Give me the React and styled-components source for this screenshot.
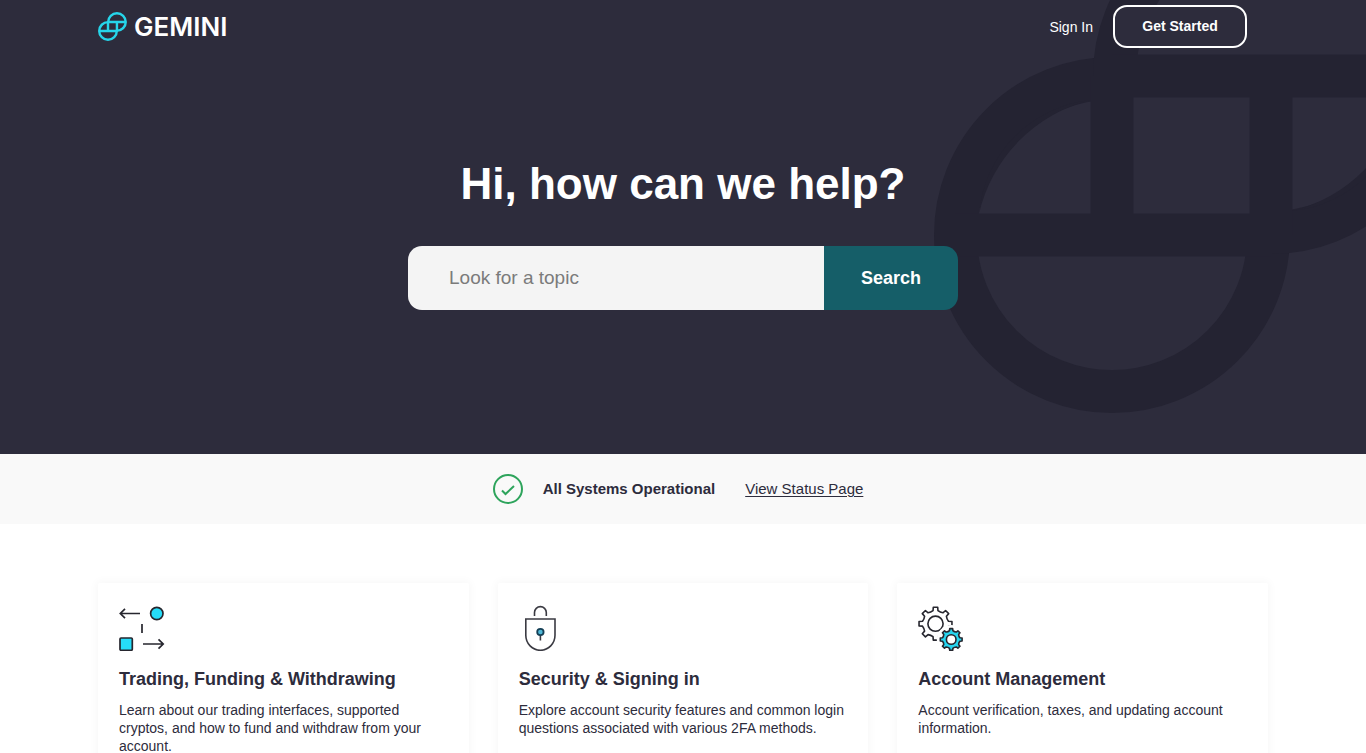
import React from "react";
import styled, { createGlobalStyle } from "styled-components";

// Outline of a cog wheel centered on cx, cy
function cogPath(cx, cy, outer, inner, teeth = 8) {
  const step = (Math.PI * 2) / teeth;
  const at = (radius, angle) =>
    `${(cx + radius * Math.sin(angle)).toFixed(2)} ${(cy - radius * Math.cos(angle)).toFixed(2)}`;
  let d = "";
  for (let i = 0; i < teeth; i++) {
    const a = i * step;
    d += `${i ? "L" : "M"}${at(inner, a - step * 0.24)}`;
    d += `L${at(outer, a - step * 0.17)}L${at(outer, a + step * 0.17)}`;
    d += `L${at(inner, a + step * 0.24)}`;
    d += `Q${at(inner - 1, a + step * 0.5)} ${at(inner, a + step * 0.76)}`;
  }
  return `${d}Z`;
}

// The two interlocked circles of the brand
function GeminiMark() {
  return (
    <g fill="none" stroke="currentColor" strokeWidth="43">
      <path d="M178 180.5A156.5 156.5 0 1 0 334.5 337" />
      <path d="M180.5 178A156.5 156.5 0 1 1 337 334.5" />
      <path d="M178 178H494M21 337H337M178 178V337M337 178V337" />
      <g fill="currentColor" stroke="none">
        <path d="M45 316A152 152 0 0 1 157 202A125 125 0 0 0 45 316Z" />
        <path d="M470 199A152 152 0 0 1 358 313A125 125 0 0 0 470 199Z" />
      </g>
    </g>
  );
}

function TradingIcon() {
  return (
    <CardIcon viewBox="0 0 46 46" aria-hidden="true">
      <g fill="none" stroke="#26262e" strokeWidth="1.7">
        <path d="M21 8.5H1.5M6 3.8L1.3 8.5L6 13.2M23 19V28M24 39H44M39.5 34.3L44.2 39L39.5 43.7" />
        <circle cx="37.8" cy="8.5" r="6.2" fill="#26ddf9" />
        <rect x="1" y="33" width="12.3" height="12.3" rx="1" fill="#26ddf9" />
      </g>
    </CardIcon>
  );
}

function SecurityIcon() {
  return (
    <CardIcon viewBox="0 0 46 46" aria-hidden="true">
      <g fill="none" stroke="#3a3a42" strokeWidth="1.6">
        <path d="M15.5 11V7.5A5.9 5.9 0 0 1 27.3 7.5V11" />
        <path d="M6.8 14H36V30.3A14.6 15 0 0 1 6.8 30.3Z" />
        <path d="M21.4 29V35.5" />
        <circle cx="21.4" cy="27" r="3.2" fill="#4fb8d8" stroke="#153f55" strokeWidth="1.8" />
      </g>
    </CardIcon>
  );
}

function AccountIcon() {
  return (
    <CardIcon viewBox="0 0 46 46" aria-hidden="true">
      <g fill="none" stroke="#26262e" strokeWidth="1.6" strokeLinejoin="round">
        <path d={cogPath(17.5, 18.7, 16.6, 13.2)} />
        <circle cx="17.5" cy="18.7" r="7.6" />
        <circle cx="33.2" cy="34.5" r="14.4" fill="#fff" stroke="none" />
        <path d={cogPath(33.2, 34.5, 11, 9)} fill="#26d5ef" />
        <circle cx="33.2" cy="34.5" r="4.8" fill="#fff" />
      </g>
    </CardIcon>
  );
}

const topics = [
  {
    icon: <TradingIcon />,
    title: "Trading, Funding & Withdrawing",
    text: "Learn about our trading interfaces, supported cryptos, and how to fund and withdraw from your account.",
  },
  {
    icon: <SecurityIcon />,
    title: "Security & Signing in",
    text: "Explore account security features and common login questions associated with various 2FA methods.",
  },
  {
    icon: <AccountIcon />,
    title: "Account Management",
    text: "Account verification, taxes, and updating account information.",
  },
];

export default function App() {
  return (
    <>
      <GlobalStyle />
      <Hero>
        <HeroArt viewBox="0 0 516 516" aria-hidden="true">
          <GeminiMark />
        </HeroArt>
        <Header>
          <Brand href="#home">
            <BrandMark viewBox="0 0 516 516" aria-hidden="true">
              <GeminiMark />
            </BrandMark>
            GEMINI
          </Brand>
          <Nav>
            <SignIn href="#sign-in">Sign In</SignIn>
            <GetStarted type="button">Get Started</GetStarted>
          </Nav>
        </Header>
        <HeroContent>
          <h1>Hi, how can we help?</h1>
          <SearchForm role="search" onSubmit={(e) => e.preventDefault()}>
            <SearchInput type="search" placeholder="Look for a topic" aria-label="Look for a topic" />
            <SearchButton type="submit">Search</SearchButton>
          </SearchForm>
        </HeroContent>
      </Hero>

      <StatusBar>
        <StatusIcon viewBox="0 0 30 30" aria-hidden="true">
          <circle cx="15" cy="15" r="14" />
          <path d="M9 16.5L12.5 20L21 12" />
        </StatusIcon>
        <strong>All Systems Operational</strong>
        <StatusLink href="#status">View Status Page</StatusLink>
      </StatusBar>

      <Topics>
        {topics.map((topic) => (
          <Card key={topic.title}>
            {topic.icon}
            <CardTitle>{topic.title}</CardTitle>
            <CardText>{topic.text}</CardText>
          </Card>
        ))}
      </Topics>
    </>
  );
}

const GlobalStyle = createGlobalStyle`
  * {
    box-sizing: border-box;
  }
  body {
    margin: 0;
    background: #fff;
    color: #2d2c3c;
    font-family: "Liberation Sans", Arial, sans-serif;
  }
  h1, h2, p {
    margin: 0;
  }
  button, input {
    font-family: inherit;
  }
`;

const Hero = styled.section`
  position: relative;
  overflow: hidden;
  padding-bottom: 144px;
  background: #2d2c3c;
  color: #fff;
`;
const HeroArt = styled.svg`
  position: absolute;
  top: -102px;
  right: -84px;
  width: 516px;
  height: 516px;
  color: #242332;
`;
const Header = styled.header`
  position: relative;
  display: flex;
  align-items: center;
  justify-content: space-between;
  max-width: 1170px;
  margin: 0 auto;
  padding: 5px 21px 0 0;
`;
const Brand = styled.a`
  display: flex;
  align-items: center;
  gap: 7px;
  color: #fff;
  font: 600 26px/30px Inter, sans-serif;
  text-decoration: none;
`;
const BrandMark = styled.svg`
  width: 29px;
  height: 29px;
  color: #26d5ea;
`;
const Nav = styled.nav`
  display: flex;
  align-items: center;
  gap: 20px;
`;
const SignIn = styled.a`
  color: #fff;
  font-size: 14px;
  line-height: 18px;
  text-decoration: none;
`;
const GetStarted = styled.button`
  width: 134px;
  height: 43px;
  padding: 0 0 1px;
  border: 2px solid #fff;
  border-radius: 14px;
  background: #2d2c3c;
  color: #fff;
  font-size: 14px;
  font-weight: 700;
  line-height: 18px;
  cursor: pointer;
`;
const HeroContent = styled.div`
  position: relative;
  display: flex;
  flex-direction: column;
  align-items: center;
  gap: 36px;
  padding: 110px 20px 0;

  h1 {
    font-size: 44px;
    line-height: 52px;
    text-align: center;
  }
`;
const SearchForm = styled.form`
  display: flex;
  width: 100%;
  max-width: 550px;
  height: 64px;
  border-radius: 14px;
  overflow: hidden;
`;
const SearchInput = styled.input`
  flex: 1;
  min-width: 0;
  padding: 0 41px;
  border: 0;
  background: #f4f4f4;
  color: #2d2c3c;
  font-size: 19px;
  appearance: none;

  &::placeholder {
    color: #7b7b7b;
  }
`;
const SearchButton = styled.button`
  width: 134px;
  border: 0;
  background: #155e68;
  color: #fff;
  font-size: 18px;
  font-weight: 700;
  cursor: pointer;
`;
const StatusBar = styled.section`
  display: flex;
  align-items: center;
  justify-content: center;
  height: 70px;
  padding-right: 10px;
  background: #f9f9f9;
  font-size: 15px;
  line-height: 18px;
`;
const StatusIcon = styled.svg`
  width: 30px;
  height: 30px;
  margin-right: 20px;
  fill: none;
  stroke: #2ea45c;
  stroke-width: 2;
`;
const StatusLink = styled.a`
  margin-left: 30px;
  color: inherit;
  text-underline-offset: 2px;
`;
const Topics = styled.main`
  display: grid;
  grid-template-columns: repeat(3, 1fr);
  gap: 29px;
  max-width: 1170px;
  margin: 0 auto;
  padding: 59px 0 60px;

  @media (max-width: 860px) {
    grid-template-columns: 1fr;
    padding: 40px 20px;
  }
`;
const Card = styled.article`
  padding: 22px 21px 24px;
  border-radius: 2px;
  background: #fff;
  box-shadow: 0 0 8px 2px rgba(0, 0, 0, 0.03);
`;
const CardIcon = styled.svg`
  display: block;
  width: 46px;
  height: 46px;
`;
const CardTitle = styled.h2`
  margin-top: 16px;
  font-size: 18px;
  line-height: 24px;
`;
const CardText = styled.p`
  margin-top: 10px;
  font-size: 14px;
  line-height: 18px;
`;
